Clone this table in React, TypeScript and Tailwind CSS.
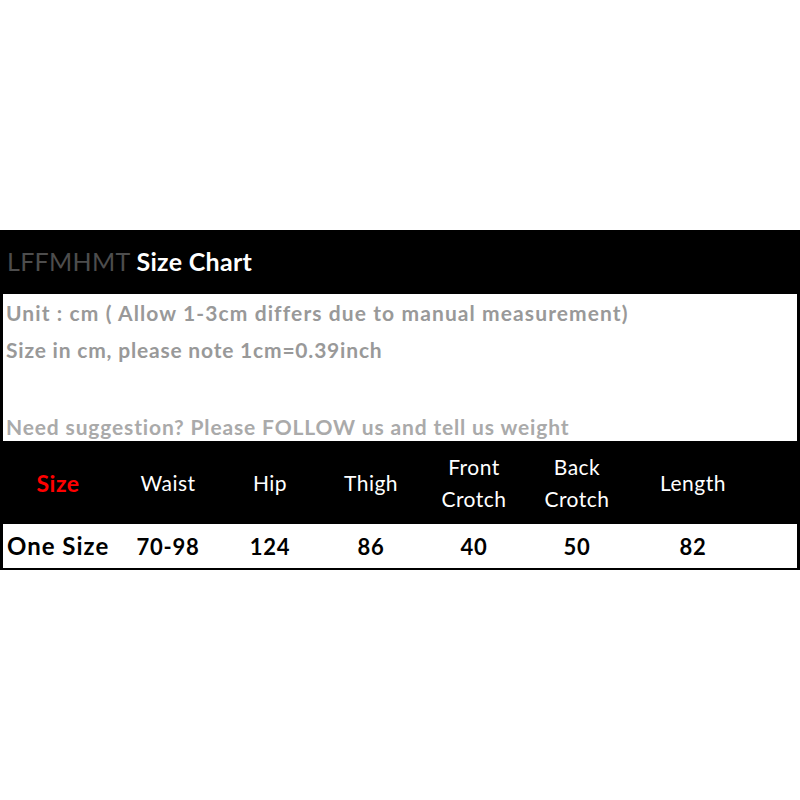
const font = { fontFamily: "Lato, 'Open Sans', sans-serif" };

const colonnes = [
  { titre: ["Size"], valeur: "One Size", largeur: "w-[116px]" },
  { titre: ["Waist"], valeur: "70-98", largeur: "w-[104px]" },
  { titre: ["Hip"], valeur: "124", largeur: "w-[100px]" },
  { titre: ["Thigh"], valeur: "86", largeur: "w-[102px]" },
  { titre: ["Front", "Crotch"], valeur: "40", largeur: "w-[104px]" },
  { titre: ["Back", "Crotch"], valeur: "50", largeur: "w-[102px]" },
  { titre: ["Length"], valeur: "82", largeur: "w-[130px]" },
];

export default function App()
{
  return (
    <div className="w-[800px] h-[800px] bg-white flex flex-col" style={font}>
      <div className="h-[230px]" />
      <div className="bg-black flex flex-col pb-[2px]">
        {/* Titre */}
        <div className="h-[64px] flex items-center pl-[7px] text-[25px] tracking-[0.3px]">
          <span className="text-[#4d4d4d] font-normal">LFFMHMT</span>
          <span className="text-white font-bold ml-[6px]">Size Chart</span>
        </div>

        {/* Infos */}
        <div className="ml-[3px] mr-[3px] h-[147px] bg-white flex flex-col pl-[3px] text-[21px] font-bold text-[#999999]">
          <div className="h-[38px] flex items-center tracking-[1.1px]">Unit : cm ( Allow 1-3cm differs due to manual measurement)</div>
          <div className="h-[36px] flex items-center tracking-[0.8px]">Size in cm, please note 1cm=0.39inch</div>
          <div className="flex-1" />
          <div className="h-[28px] flex items-center tracking-[0.85px] text-[#aaaaaa]">Need suggestion? Please FOLLOW us and tell us weight</div>
        </div>

        {/* En-tête */}
        <div className="h-[83px] flex items-center text-white text-[21px] tracking-[0.5px]">
          {colonnes.map((col, index) => (
            <div key={index} className={`${col.largeur} flex flex-col items-center leading-[32px] ${index === 0 ? "text-[#ff0000] font-bold text-[23px]" : ""}`}>
              {col.titre.map((t) => <span key={t}>{t}</span>)}
            </div>
          ))}
        </div>

        {/* Valeurs */}
        <div className="ml-[3px] mr-[3px] h-[44px] bg-white flex items-center text-[22px] tracking-[0.8px] font-bold text-black">
          {colonnes.map((col, index) => (
            <div key={index} className={`${index === 0 ? "w-[113px] pl-[4px] text-[24px] tracking-[1px]" : col.largeur + " text-center"}`}>
              {col.valeur}
            </div>
          ))}
        </div>
      </div>
    </div>
  )
}
